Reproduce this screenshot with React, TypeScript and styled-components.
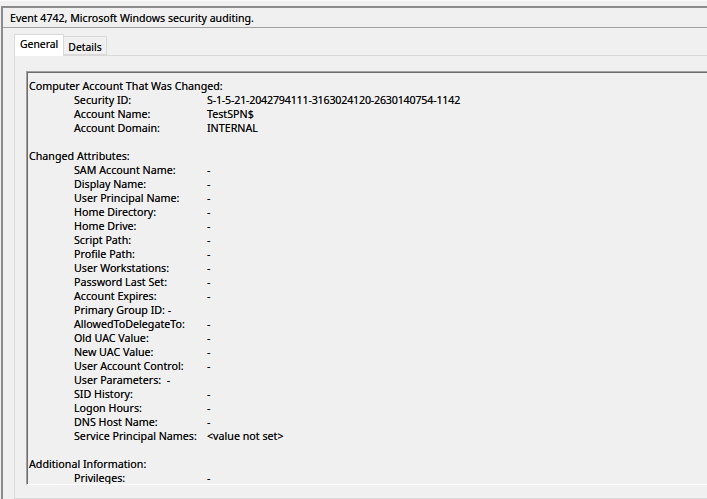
import React from "react";
import styled, { createGlobalStyle } from "styled-components";

const GlobalStyle = createGlobalStyle`
  html, body { margin: 0; padding: 0; background: #f0f0f0; }
  body { font-family: "Noto Sans", "Open Sans", sans-serif; color: #000; }
`;

const Page = styled.div`
  width: 707px;
  height: 499px;
  overflow: hidden;
  background: #f0f0f0;
  display: flex;
  flex-direction: column;
  border-top: 1px solid #fbfbfb;
  box-sizing: border-box;
`;

const TopStrip = styled.div`
  height: 5px;
  flex: none;
`;

const Window = styled.div`
  flex: 1;
  min-height: 0;
  display: flex;
  flex-direction: column;
  margin-left: 1px;
  border-top: 2px solid #8c8c8c;
  border-left: 2px solid #8c8c8c;
`;

const Header = styled.div`
  height: 19px;
  flex: none;
  display: flex;
  align-items: center;
  padding-left: 7px;
  border-bottom: 1px solid #a0a0a0;
  font-size: 10.6px;
  text-shadow: 0 0 0.4px rgba(0, 0, 0, 0.6);
`;

const TabArea = styled.div`
  flex: 1;
  min-height: 0;
  display: flex;
  flex-direction: column;
  padding: 6px 0 0 11px;
`;

const TabStrip = styled.div`
  display: flex;
  align-items: flex-end;
  height: 21px;
  flex: none;
  position: relative;
  z-index: 1;
`;

const Tab = styled.div<{ $active?: boolean }>`
  box-sizing: border-box;
  height: ${(p) => (p.$active ? "22px" : "19px")};
  margin-bottom: ${(p) => (p.$active ? "-1px" : "0")};
  padding: ${(p) => (p.$active ? "2px 5px 0 5px" : "2px 4px 0 4px")};
  background: ${(p) => (p.$active ? "#ffffff" : "#f0f0f0")};
  border: 1px solid #d9d9d9;
  border-bottom: ${(p) => (p.$active ? "none" : "1px solid #d9d9d9")};
  border-left: ${(p) => (p.$active ? "1px solid #d9d9d9" : "none")};
  font-size: 10.4px;
  line-height: 14px;
  text-shadow: 0 0 0.4px rgba(0, 0, 0, 0.6);
  display: flex;
  align-items: ${(p) => (p.$active ? "flex-start" : "center")};
`;

const Panel = styled.div`
  flex: 1;
  min-height: 0;
  border: 1px solid #d9d9d9;
  border-right: none;
  background: #f0f0f0;
  padding: 15px 0 0 11px;
`;

const TextBox = styled.div`
  width: 700px;
  height: 414px;
  box-sizing: border-box;
  border: 1px solid;
  border-color: #a0a0a0 #ffffff #ffffff #a0a0a0;
  box-shadow: inset 1px 1px 0 #6d6d6d;
  padding: 7px 0 0 2px;
  font-size: 10.7px;
  line-height: 14px;
  text-shadow: 0 0 0.4px rgba(0, 0, 0, 0.6);
  overflow: hidden;
`;

const Section = styled.div`
  height: 14px;
  white-space: pre;
`;

const Row = styled.div`
  display: grid;
  grid-template-columns: 133px auto;
  padding-left: 45px;
  height: 14px;
  white-space: pre;
`;

const Value = styled.span<{ $tight?: boolean }>`
  letter-spacing: ${(p) => (p.$tight ? "-0.2px" : "0")};
`;

const Blank = styled.div`
  height: 14px;
`;

type Item = { label: string; value?: string; inline?: boolean; tight?: boolean };

const account: Item[] = [
  { label: "Security ID:", value: "S-1-5-21-2042794111-3163024120-2630140754-1142", tight: true },
  { label: "Account Name:", value: "TestSPN$" },
  { label: "Account Domain:", value: "INTERNAL" },
];

const attrs: Item[] = [
  { label: "SAM Account Name:", value: "-" },
  { label: "Display Name:", value: "-" },
  { label: "User Principal Name:", value: "-" },
  { label: "Home Directory:", value: "-" },
  { label: "Home Drive:", value: "-" },
  { label: "Script Path:", value: "-" },
  { label: "Profile Path:", value: "-" },
  { label: "User Workstations:", value: "-" },
  { label: "Password Last Set:", value: "-" },
  { label: "Account Expires:", value: "-" },
  { label: "Primary Group ID: -", inline: true },
  { label: "AllowedToDelegateTo:", value: "-" },
  { label: "Old UAC Value:", value: "-" },
  { label: "New UAC Value:", value: "-" },
  { label: "User Account Control:", value: "-" },
  { label: "User Parameters:  -", inline: true },
  { label: "SID History:", value: "-" },
  { label: "Logon Hours:", value: "-" },
  { label: "DNS Host Name:", value: "-" },
  { label: "Service Principal Names:", value: "<value not set>" },
];

const extra: Item[] = [{ label: "Privileges:", value: "-" }];

const Rows = ({ items }: { items: Item[] }) => (
  <>
    {items.map((it) => (
      <Row key={it.label}>
        <span>{it.label}</span>
        <Value $tight={it.tight}>{it.inline ? "" : it.value}</Value>
      </Row>
    ))}
  </>
);

export default function App() {
  return (
    <>
      <GlobalStyle />
      <Page>
        <TopStrip />
        <Window>
          <Header>Event 4742, Microsoft Windows security auditing.</Header>
          <TabArea>
            <TabStrip>
              <Tab $active>General</Tab>
              <Tab>Details</Tab>
            </TabStrip>
            <Panel>
              <TextBox>
                <Section>Computer Account That Was Changed:</Section>
                <Rows items={account} />
                <Blank />
                <Section>Changed Attributes:</Section>
                <Rows items={attrs} />
                <Blank />
                <Section>Additional Information:</Section>
                <Rows items={extra} />
              </TextBox>
            </Panel>
          </TabArea>
        </Window>
      </Page>
    </>
  );
}
